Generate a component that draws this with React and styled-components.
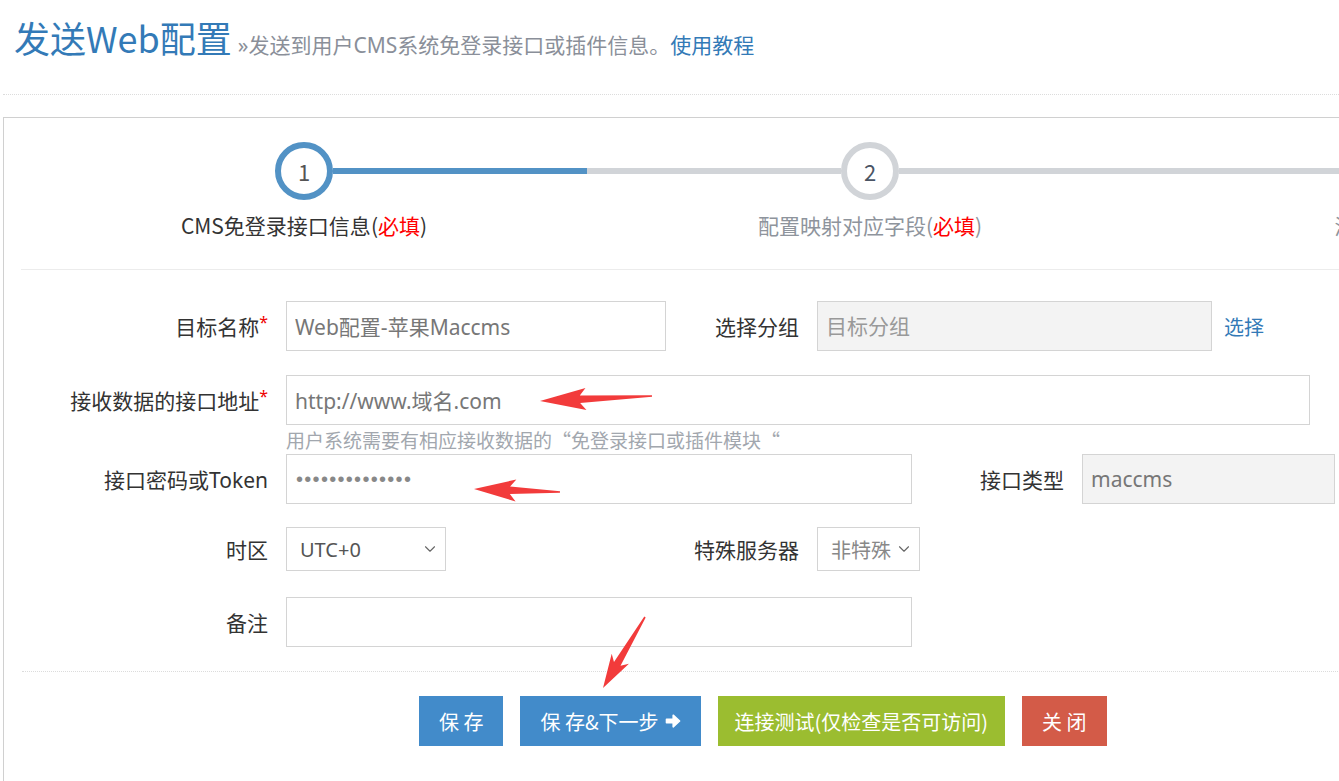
import styled, { createGlobalStyle } from "styled-components";
import { ChevronDown } from "lucide-react";

const GlobalStyle = createGlobalStyle`
  html, body {
    margin: 0;
    padding: 0;
    background: #fff;
    overflow: hidden;
  }
  body {
    font-family: "Noto Sans CJK SC", "Noto Sans", sans-serif;
    color: #333;
  }
`;

const mixed = `"Noto Sans", "Noto Sans CJK SC", sans-serif`;

const Page = styled.div`
  position: relative;
  width: 1339px;
  height: 781px;
  overflow: hidden;
`;

const Header = styled.div`
  box-sizing: border-box;
  height: 95px;
  margin: 0 0 0 3px;
  padding: 16px 0 0 11px;
  border-bottom: 1px dotted #dcdcdc;
  display: flex;
  align-items: baseline;
`;

const Title = styled.h1`
  margin: 0;
  font-size: 36px;
  font-weight: 400;
  line-height: 1.2;
  color: #337ab7;
`;

const Subtitle = styled.span`
  margin-left: 6px;
  font-family: ${mixed};
  font-size: 21px;
  color: #8a8f99;

  a {
    color: #337ab7;
    text-decoration: none;
  }
`;

const Panel = styled.div`
  width: 1720px;
  min-height: 700px;
  margin: 22px 0 0 3px;
  padding-left: 18px;
  border: 1px solid #d0d0d0;
`;

const Steps = styled.div`
  display: flex;
  margin-left: -1px;
  padding: 24px 0 29px;
  border-bottom: 1px solid #ececec;
`;

const Step = styled.div`
  width: 566px;
  display: flex;
  flex-direction: column;
  align-items: stretch;
`;

const Track = styled.div`
  display: flex;
  align-items: center;
  height: 58px;
`;

const Line = styled.div`
  flex: 1;
  height: 6px;
  background: ${(p) => p.$color};
`;

const Circle = styled.div`
  box-sizing: border-box;
  width: 58px;
  height: 58px;
  border-radius: 50%;
  border: 6px solid ${(p) => (p.$active ? "#5292c5" : "#d1d4d8")};
  display: flex;
  align-items: center;
  justify-content: center;
  font-size: 22px;
  color: ${(p) => (p.$active ? "#555" : "#4a5464")};
  background: #fff;
`;

const StepLabel = styled.div`
  margin-top: 10px;
  line-height: 30px;
  text-align: center;
  font-size: 21px;
  white-space: nowrap;
  color: ${(p) => (p.$active ? "#333" : "#8e949c")};

  em {
    font-style: normal;
    color: #f00;
  }
`;

const Form = styled.div`
  padding: 31px 0 24px;
`;

const Row = styled.div`
  display: flex;
  align-items: center;
  height: ${(p) => p.$h || 50}px;
  margin-bottom: ${(p) => (p.$mb === undefined ? 24 : p.$mb)}px;
`;

const Label = styled.div`
  box-sizing: border-box;
  width: ${(p) => p.$w}px;
  padding-right: 18px;
  text-align: right;
  font-family: ${mixed};
  font-size: 21px;
  color: #333;
  white-space: nowrap;

  i {
    font-style: normal;
    color: #e00;
    font-size: 16px;
    vertical-align: top;
  }
`;

const Input = styled.input`
  box-sizing: border-box;
  width: ${(p) => p.$w}px;
  height: 100%;
  padding: 0 8px;
  border: 1px solid #d4d4d4;
  border-radius: 0;
  outline: none;
  font-family: ${mixed};
  font-size: 21px;
  color: #777;
  background: ${(p) => (p.$disabled ? "#f3f3f3" : "#fff")};

  &::placeholder {
    color: #999;
  }
`;

const Secret = styled(Input)`
  padding-left: 9px;
  font-family: "Liberation Sans", sans-serif;
  font-size: 20px;
  letter-spacing: 1.3px;
  color: #888;
`;

const SelectBox = styled.div`
  box-sizing: border-box;
  width: ${(p) => p.$w}px;
  height: 100%;
  padding: 0 6px 0 13px;
  border: 1px solid #d4d4d4;
  display: flex;
  align-items: center;
  justify-content: space-between;
  font-family: ${mixed};
  font-size: 20px;
  color: ${(p) => p.$color || "#555"};
`;

const LinkText = styled.a`
  margin-left: 12px;
  font-size: 20px;
  color: #337ab7;
  text-decoration: none;
`;

const Help = styled.div`
  height: 29px;
  padding-left: 264px;
  font-size: 19px;
  line-height: 30px;
  color: #a2a7ae;
  white-space: nowrap;
`;

const Footer = styled.div`
  display: flex;
  gap: 17px;
  padding: 24px 0 0 397px;
  border-top: 1px dotted #dcdcdc;
`;

const Button = styled.button`
  height: 50px;
  padding: 0 ${(p) => p.$px || 20}px;
  border: none;
  border-radius: 0;
  font-family: "Noto Sans CJK SC", "Noto Sans", sans-serif;
  font-size: 20px;
  color: #fff;
  background: ${(p) => p.$bg};
  display: flex;
  align-items: center;
  gap: 6px;
  white-space: pre;
`;

const ArrowWrap = styled.svg`
  position: absolute;
  overflow: visible;
  transform-origin: 0 0;
`;

function NextIcon() {
  return (
    <svg width="16" height="16" viewBox="0 0 16 16">
      <path
        d="M1.5 6.2 H8.2 V2.2 L14.6 8 L8.2 13.8 V9.8 H1.5 Z"
        fill="#fff"
        stroke="#fff"
        strokeWidth="1.6"
        strokeLinejoin="round"
      />
    </svg>
  );
}

function RedArrow({ x, y, tx, ty, head = 44, half = 11 }) {
  const dx = tx - x;
  const dy = ty - y;
  const len = Math.sqrt(dx * dx + dy * dy);
  const ang = (Math.atan2(dy, dx) * 180) / Math.PI;
  const pts = [
    [0, 0],
    [head, -half],
    [head - 6, -3.8],
    [len, -0.8],
    [len, 0.8],
    [head - 6, 3.8],
    [head, half],
  ]
    .map((p) => p.join(","))
    .join(" ");
  return (
    <ArrowWrap
      width="1"
      height="1"
      style={{ left: x, top: y, transform: `rotate(${ang}deg)` }}
    >
      <polygon points={pts} fill="#f23b3b" />
    </ArrowWrap>
  );
}

const steps = [
  { n: 1, text: "CMS免登录接口信息", req: "必填", active: true },
  { n: 2, text: "配置映射对应字段", req: "必填" },
  { n: 3, text: "添加到发布任务", req: "可选" },
];

export default function App() {
  return (
    <Page>
      <GlobalStyle />
      <Header>
        <Title>发送Web配置</Title>
        <Subtitle>
          »发送到用户CMS系统免登录接口或插件信息。<a href="#">使用教程</a>
        </Subtitle>
      </Header>
      <Panel>
        <Steps>
          {steps.map((s, i) => (
            <Step key={s.n}>
              <Track>
                <Line $color={i === 0 ? "transparent" : "#d1d4d8"} />
                <Circle $active={s.active}>{s.n}</Circle>
                <Line $color={s.active ? "#5292c5" : "#d1d4d8"} />
              </Track>
              <StepLabel $active={s.active}>
                {s.text}(<em>{s.req}</em>)
              </StepLabel>
            </Step>
          ))}
        </Steps>
        <Form>
          <Row>
            <Label $w={264}>
              目标名称<i>*</i>
            </Label>
            <Input $w={380} defaultValue="Web配置-苹果Maccms" />
            <Label $w={151}>选择分组</Label>
            <Input $w={395} $disabled placeholder="目标分组" readOnly />
            <LinkText href="#">选择</LinkText>
          </Row>
          <Row $mb={0}>
            <Label $w={264}>
              接收数据的接口地址<i>*</i>
            </Label>
            <Input $w={1024} defaultValue="http://www.域名.com" />
          </Row>
          <Help>用户系统需要有相应接收数据的“免登录接口或插件模块“</Help>
          <Row $mb={23}>
            <Label $w={264}>接口密码或Token</Label>
            <Secret $w={626} defaultValue="••••••••••••••" />
            <Label $w={170}>接口类型</Label>
            <Input $w={253} $disabled defaultValue="maccms" readOnly />
          </Row>
          <Row $h={44} $mb={26}>
            <Label $w={264}>时区</Label>
            <SelectBox $w={160}>
              UTC+0
              <ChevronDown size={18} strokeWidth={1.5} color="#666" />
            </SelectBox>
            <Label $w={371}>特殊服务器</Label>
            <SelectBox $w={103} $color="#888">
              非特殊
              <ChevronDown size={18} strokeWidth={1.5} color="#666" />
            </SelectBox>
          </Row>
          <Row $mb={0}>
            <Label $w={264}>备注</Label>
            <Input $w={626} />
          </Row>
        </Form>
        <Footer>
          <Button $bg="#428bca">保 存</Button>
          <Button $bg="#428bca" $px={20}>
            保 存&下一步
            <NextIcon />
          </Button>
          <Button $bg="#9bbd30" $px={17}>
            连接测试(仅检查是否可访问)
          </Button>
          <Button $bg="#d35b48" $px={20}>
            关 闭
          </Button>
        </Footer>
      </Panel>
      <RedArrow x={540} y={401} tx={652} ty={396} head={46} half={11} />
      <RedArrow x={474} y={489} tx={560} ty={492} head={42} half={11} />
      <RedArrow x={603} y={688} tx={645} ty={617} head={34} half={10} />
    </Page>
  );
}
